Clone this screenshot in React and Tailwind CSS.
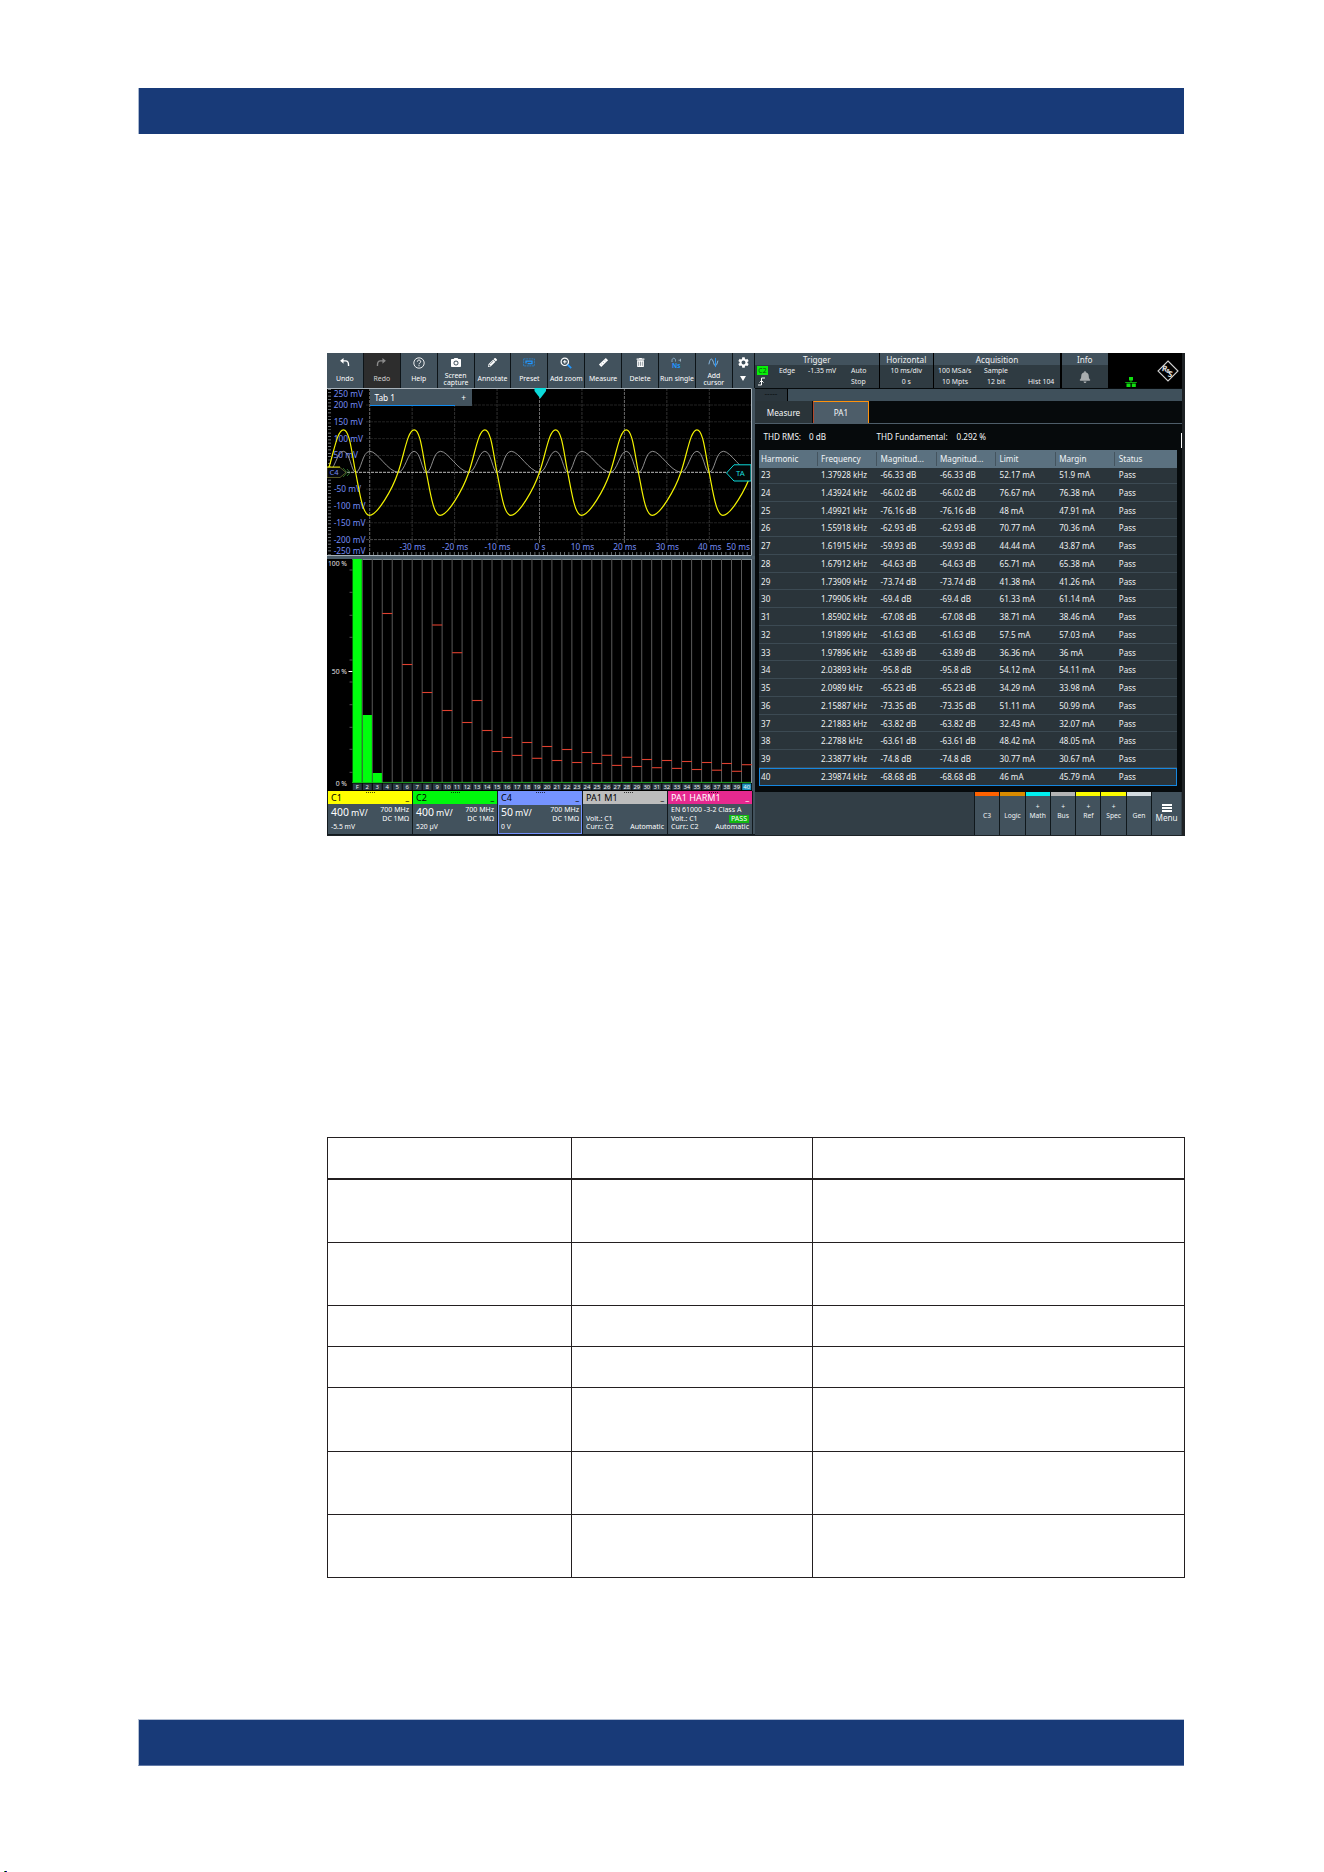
import { FaBell, FaPencilAlt, FaTrashAlt } from 'react-icons/fa';
import { MdPhotoCamera, MdSettings } from 'react-icons/md';

const UndoIcon = ({ flip }) => (
  <svg viewBox="0 0 12 12" className={flip ? 'h-[11px] w-[11px] -scale-x-100' : 'h-[11px] w-[11px]'}>
    <path d="M5 1 1.2 4.2 5 7.4Z" fill="currentColor" />
    <path d="M3 4.2h4.2c2.4 0 3.2 1.6 3.2 4.4v1.2" fill="none" stroke="currentColor" strokeWidth="1.5" />
  </svg>
);

const HelpIcon = () => (
  <svg viewBox="0 0 12 12" className="h-[12px] w-[12px]" fill="none" stroke="currentColor">
    <circle cx="6" cy="6" r="5.2" strokeWidth="0.9" />
    <path d="M4.3 4.7c0-2.2 3.4-2.2 3.4 0C7.7 5.9 6 5.9 6 7.3" strokeWidth="1" />
    <path d="M6 8.2v1.1" strokeWidth="1.1" />
  </svg>
);

const PresetIcon = () => (
  <svg viewBox="0 0 12 9" className="h-[9px] w-[12px]" fill="none">
    <rect x="0.6" y="0.9" width="10.8" height="7" stroke="#2b7fc4" strokeWidth="0.9" strokeDasharray="2 .6" />
    <path d="M3 5.600V3.200h6v2.400H4.600" stroke="#2196ff" strokeWidth="1.3" />
  </svg>
);

const ZoomIcon = () => (
  <svg viewBox="0 0 12 12" className="h-[12px] w-[12px]" fill="none">
    <circle cx="4.8" cy="4.8" r="3.7" stroke="#fff" strokeWidth="1.2" />
    <path d="M4.8 3v3.6M3 4.8h3.6" stroke="#fff" strokeWidth="1" />
    <path d="m7.6 7.6 3.6 3.6" stroke="#2196ff" strokeWidth="1.8" />
  </svg>
);

const MeasureIcon = () => (
  <svg viewBox="0 0 12 12" className="h-[11px] w-[11px]">
    <path d="M1 8.3 8.500 1 11 3.500 3.500 11Z" fill="#fff" />
    <path d="m3.5 7.5 1 1M5.5 5.6l1 1M7.5 3.7l1 1" stroke="#60707b" strokeWidth="0.6" />
  </svg>
);

const RunSingleIcon = () => (
  <svg viewBox="0 0 12 12" className="h-[12px] w-[12px]" fill="none">
    <path d="M1 5V3.500C1 .5 4.5.5 4.5 3.500v1" stroke="#8fb6d2" strokeWidth="0.9" />
    <path d="M7.5 3.2h1.8M9.5 1.8v2.8" stroke="#a7bccb" strokeWidth="0.8" />
    <text x="1" y="11" fontSize="6.5" fontWeight="700" fill="#2196ff">Ns</text>
  </svg>
);

const CursorIcon = () => (
  <svg viewBox="0 0 12 12" className="h-[11px] w-[11px]" fill="none">
    <path d="M1 8C2.5 0 4.5 1 6 6s3 5 4.8-2" stroke="#8fc1ea" strokeWidth="1" />
    <path d="M8.2 1v10" stroke="#2196ff" strokeWidth="1" />
  </svg>
);

const TOOLS = [
  { label: 'Undo', icon: <UndoIcon /> },
  { label: 'Redo', icon: <UndoIcon flip />, disabled: true },
  { label: 'Help', icon: <HelpIcon /> },
  { label: 'Screen capture', icon: <MdPhotoCamera size={12} /> },
  { label: 'Annotate', icon: <FaPencilAlt size={9} /> },
  { label: 'Preset', icon: <PresetIcon /> },
  { label: 'Add zoom', icon: <ZoomIcon /> },
  { label: 'Measure', icon: <MeasureIcon /> },
  { label: 'Delete', icon: <FaTrashAlt size={9} /> },
  { label: 'Run single', icon: <RunSingleIcon /> },
  { label: 'Add cursor', icon: <CursorIcon /> },
];

const HARMONICS = [
  ['23', '1.37928 kHz', '-66.33 dB', '52.17 mA', '51.9 mA'],
  ['24', '1.43924 kHz', '-66.02 dB', '76.67 mA', '76.38 mA'],
  ['25', '1.49921 kHz', '-76.16 dB', '48 mA', '47.91 mA'],
  ['26', '1.55918 kHz', '-62.93 dB', '70.77 mA', '70.36 mA'],
  ['27', '1.61915 kHz', '-59.93 dB', '44.44 mA', '43.87 mA'],
  ['28', '1.67912 kHz', '-64.63 dB', '65.71 mA', '65.38 mA'],
  ['29', '1.73909 kHz', '-73.74 dB', '41.38 mA', '41.26 mA'],
  ['30', '1.79906 kHz', '-69.4 dB', '61.33 mA', '61.14 mA'],
  ['31', '1.85902 kHz', '-67.08 dB', '38.71 mA', '38.46 mA'],
  ['32', '1.91899 kHz', '-61.63 dB', '57.5 mA', '57.03 mA'],
  ['33', '1.97896 kHz', '-63.89 dB', '36.36 mA', '36 mA'],
  ['34', '2.03893 kHz', '-95.8 dB', '54.12 mA', '54.11 mA'],
  ['35', '2.0989 kHz', '-65.23 dB', '34.29 mA', '33.98 mA'],
  ['36', '2.15887 kHz', '-73.35 dB', '51.11 mA', '50.99 mA'],
  ['37', '2.21883 kHz', '-63.82 dB', '32.43 mA', '32.07 mA'],
  ['38', '2.2788 kHz', '-63.61 dB', '48.42 mA', '48.05 mA'],
  ['39', '2.33877 kHz', '-74.8 dB', '30.77 mA', '30.67 mA'],
  ['40', '2.39874 kHz', '-68.68 dB', '46 mA', '45.79 mA'],
];

const COLUMNS = ['Harmonic', 'Frequency', 'Magnitud...', 'Magnitud...', 'Limit', 'Margin', 'Status'];

// harmonic number -> y of its limit line in the bar chart
const LIMITS = {
  4: 54.5, 6: 105.5, 8: 133.5, 9: 66, 10: 151.5, 11: 93.7, 12: 163.5, 13: 141.5, 14: 171.5,
  15: 192.5, 16: 178.5, 17: 196.4, 18: 183.5, 19: 199.3, 20: 187.5, 21: 201.5, 22: 190.5,
  23: 203.5, 24: 193.5, 25: 204.5, 26: 196.3, 27: 206.4, 28: 198.3, 29: 207.5, 30: 200.5,
  31: 208.7, 32: 201.5, 33: 209.4, 34: 202.5, 35: 210.5, 36: 203.5, 37: 211.2, 38: 204.5,
  39: 212.3, 40: 205.7,
};

const PERIOD = 70.7;
const CYCLES = [-4, -3, -2, -1, 0, 1, 2, 3];
const X0 = 212.5;
const Y0 = 84.3;

function currentPath() {
  return CYCLES.map((n) => {
    const x = (d) => (X0 + n * PERIOD + d).toFixed(1);
    const y = (d) => (Y0 - d).toFixed(1);
    return `M${x(0)} ${y(0)}C${x(6)} ${y(17)} ${x(9.5)} ${y(42.5)} ${x(16)} ${y(42.5)}S${x(24.5)} ${y(18)} ${x(28.2)} ${y(0)}S${x(35)} ${y(-43)} ${x(42)} ${y(-43)}C${x(50)} ${y(-43)} ${x(65)} ${y(-17)} ${x(70.7)} ${y(0)}`;
  }).join('');
}

function powerPath() {
  return CYCLES.map((n) => {
    const x = (d) => (X0 + n * PERIOD + d).toFixed(1);
    const y = (d) => (Y0 - d).toFixed(1);
    return `M${x(0)} ${y(0)}C${x(7)} ${y(0)} ${x(9.5)} ${y(21)} ${x(16)} ${y(21)}S${x(24)} ${y(0)} ${x(28.2)} ${y(0)}C${x(34)} ${y(0)} ${x(34.5)} ${y(21)} ${x(42.5)} ${y(21)}C${x(50)} ${y(21)} ${x(60)} ${y(1)} ${x(70.7)} ${y(0)}`;
  }).join('');
}

function WaveformPlot() {
  const volts = [200, 150, 100, 50, -50, -100, -150, -200];
  const times = [-30, -20, -10, 0, 10, 20, 30, 40];
  return (
    <svg viewBox="0 0 425 168" className="block h-[168px] w-[425px] bg-black" fontSize="8.3">
      {volts.map((v) => (
        <path
          key={v}
          d={`M39 ${Y0 - v * 0.3365}H425`}
          stroke={v === -200 ? '#6a6a6a' : '#303030'}
          strokeWidth="0.7"
          strokeDasharray="3 1"
        />
      ))}
      {[-40, ...times].map((t) => (
        <path
          key={t}
          d={`M${X0 + t * 4.245} 0V${t === -40 ? 168 : 155}`}
          stroke={t === 0 || t === 20 || t === -40 ? '#858585' : '#3c3c3c'}
          strokeWidth="0.8"
          strokeDasharray="3 1"
        />
      ))}
      <path d={`M0 ${Y0}H425`} stroke="#cfcfcf" strokeWidth="0.9" strokeDasharray="3 1" />
      <path d="M2.5 1V167" stroke="#8b9499" strokeWidth="3" strokeDasharray="0.7 2.665" />
      <path d="M42 165.5H424" stroke="#8b9499" strokeWidth="3" strokeDasharray="0.7 3.545" />

      <g fill="#748cf4">
        <text x="36" y="9" textAnchor="end">250 mV</text>
        {volts.map((v) => (
          <text key={v} x={v > 0 ? (v < 100 ? 31 : 36) : v > -100 ? 34 : 38.5} y={Y0 - v * 0.3365 + 3} textAnchor="end">
            {v} mV
          </text>
        ))}
        <text x="38.5" y="165.8" textAnchor="end">-250 mV</text>
        {times.map((t) => (
          <text key={t} x={X0 + t * 4.245 + 0.5} y="162" textAnchor="middle">
            {t === 0 ? '0 s' : `${t} ms`}
          </text>
        ))}
        <text x="423" y="162" textAnchor="end">50 ms</text>
      </g>

      <path d={powerPath()} fill="none" stroke="#b2b2b2" strokeWidth="0.8" />
      <path d={currentPath()} fill="none" stroke="#f2f200" strokeWidth="1.2" />

      <path d="M0 79.5H13L19 84.5 13 89.5H0Z" fill="#05070d" stroke="#7a7a32" strokeWidth="0.7" />
      <path d="M0 79H13" stroke="#f2f200" strokeWidth="0.9" />
      <path d="m16 80 4 4.5-4 4.5m4-8 3 3.5-3 3.5" fill="none" stroke="#3d9b3d" strokeWidth="0.7" />
      <text x="2.5" y="87.2" fontSize="7.5" fill="#748cf4">C4</text>

      <path d="M399.5 85 407 76.8H424V93H407Z" fill="#020708" stroke="#0cdada" strokeWidth="1" />
      <text x="409" y="88" fontSize="7.8" fill="#19dede">TA</text>
      <path d="M0 .5H424.5V167.5H0" fill="none" stroke="#a8b3bb" strokeWidth="1" />
      <path d="M207.5 0H219V3L213.3 10.5 207.5 3Z" fill="#0cdada" />
    </svg>
  );
}

function HarmonicsPlot() {
  const bars = Array.from({ length: 40 }, (_, i) => i + 1);
  const ticks = [11, 33.3, 56.3, 78.3, 101, 123, 145.7, 168.3, 190.3, 213.3];
  return (
    <svg viewBox="0 0 425 232" className="block h-[232px] w-[425px] bg-black">
      <g fontSize="6.8" fill="#e2e2e2" textAnchor="end">
        <text x="20" y="7.2">100 %</text>
        <text x="20" y="115">50 %</text>
        <text x="20" y="226.5">0 %</text>
      </g>
      {ticks.map((y) => (
        <path key={y} d={`M22.5 ${y}h3`} stroke="#777" strokeWidth="0.7" />
      ))}
      <path d="M21.5 112.5h4" stroke="#fff" strokeWidth="1" />
      <path d="M25.5 .5H425" stroke="#7b8990" strokeWidth="1" />
      {bars.map((n) => (
        <path key={n} d={`M${25.3 + n * 9.98} 0V224`} stroke="#5a5a5a" strokeWidth="1" />
      ))}
      <path d="M424.5 0V224" stroke="#8b969d" strokeWidth="1" />
      <path d="M25 223.4H424" stroke="#1fa01f" strokeWidth="1" />
      <path d="M25.6 0h9.2v223.500h-9.2zM35.700 156h9.2v67.500h-9.2zM45.700 214h9.2v9.500h-9.2z" fill="#00ff0d" />
      {Object.entries(LIMITS).map(([n, y]) => (
        <path key={n} d={`M${15.300 + n * 9.99} ${y}h10`} stroke="#e0402f" strokeWidth="1.1" />
      ))}
      {bars.map((n) => (
        <g key={n}>
          <rect x={15.8 + n * 9.985} y="224.5" width="9" height="6.5" fill={n === 40 ? '#1c93c0' : '#2b3a43'} />
          <text x={20.3 + n * 9.985} y="230" textAnchor="middle" fontSize="5.9" fill="#eef1f3">
            {n === 1 ? 'F' : n}
          </text>
        </g>
      ))}
    </svg>
  );
}

// three dots in the middle of a box header
const Grip = () => <span className="mt-px h-px w-[9px] border-t border-dotted border-black/70" />;

function ChannelBox({ name, head, scale, unit, offset, active }) {
  return (
    <div className="flex h-full w-[84px] flex-col bg-[#42525d] text-white">
      <div className={`grid h-[13px] shrink-0 grid-cols-[1fr_auto_1fr] px-[3px] text-[9px] leading-[13px] text-black ${head}`}>
        <span>{name}</span>
        <Grip />
        <span className="text-right text-[8px] leading-[12px]">_</span>
      </div>
      <div className={`flex flex-1 flex-col border px-[2px] pt-px ${active ? 'border-[#7593ff]' : 'border-transparent'}`}>
        <div className="flex justify-between">
          <div className="text-[10.4px] leading-[12.500px]">
            {scale} <span className="-ml-[0.5px] text-[8.8px]">{unit}</span>
          </div>
          <div className="text-right text-[7px] leading-[8.5px]">
            700 MHz
            <br />
            DC 1MΩ
          </div>
        </div>
        <div className="text-[6.8px] leading-[8px]">{offset}</div>
      </div>
    </div>
  );
}

function AnalysisBox({ name, head, standard, pass }) {
  return (
    <div className="flex h-full w-[84px] flex-col bg-[#42525d] text-white">
      <div className={`grid h-[13px] shrink-0 grid-cols-[38px_auto_1fr] px-[3px] text-[9px] leading-[13px] whitespace-nowrap ${head}`}>
        <span>{name}</span>
        <Grip />
        <span className="text-right text-[8px] leading-[12px]">_</span>
      </div>
      <div className="px-[3px] pt-[2px] text-[7px] leading-[8.5px] whitespace-nowrap">
        <div className="h-[8.5px]">{standard}</div>
        <div className="flex justify-between">
          <span>Volt.: C1</span>
          {pass && <span className="h-[8.5px] bg-[#12b812] px-[2px]">PASS</span>}
        </div>
        <div className="flex justify-between">
          <span>Curr.: C2</span>
          <span>Automatic</span>
        </div>
      </div>
    </div>
  );
}

function Toolbar() {
  return (
    <div className="flex h-[35px] bg-[#0d1418] text-white">
      {TOOLS.map(({ label, icon, disabled }) => (
        <div key={label} className="w-[36.9px] shrink-0 pr-px">
          <div className={`flex h-full flex-col items-center ${disabled ? 'bg-[#2d2d2d] text-[#8b8b8b]' : 'bg-[#42525d]'}`}>
            <div className="flex h-[19px] items-center justify-center">{icon}</div>
            <div className="flex h-[15px] w-[30px] items-center justify-center text-center text-[6.9px] leading-[6.2px]">
              <span className={disabled ? 'text-[#d5d5d5]' : label.includes('cap') || label.includes('cur') ? 'w-[24px]' : 'whitespace-nowrap'}>
                {label}
              </span>
            </div>
          </div>
        </div>
      ))}
      <div className="flex flex-1 flex-col items-center bg-[#42525d] pt-[3px]">
        <MdSettings size={13} />
        <svg viewBox="0 0 6 5" className="mt-[7px] h-[5px] w-[6px]">
          <path d="M0 0H6L3 5Z" fill="#fff" />
        </svg>
      </div>
      <div className="w-px" />
    </div>
  );
}

function StatusPanel({ title, width, children }) {
  return (
    <div className={`flex flex-col bg-[#2f3b42] ${width}`}>
      <div className="h-[12px] bg-[#42525d] text-center text-[8.2px] leading-[13px]">{title}</div>
      {children}
    </div>
  );
}

function StatusBar() {
  return (
    <div className="flex h-[35px] gap-[1.5px] bg-black text-[6.9px] leading-[11px] text-[#eef0f1]">
      <StatusPanel title="Trigger" width="w-[123.5px]">
        <div className="grid grid-cols-[22px_29px_43px_1fr] pl-[2px] whitespace-nowrap">
          <span className="mt-px h-[9px] w-[11px] bg-[#08ee08] text-center leading-[9px] text-[#0b560b]">C2</span>
          <span>Edge</span>
          <span>-1.35 mV</span>
          <span>Auto</span>
          <svg viewBox="0 0 10 9" className="mt-px h-[9px] w-[10px]" fill="none" stroke="#fff">
            <path d="M1 8h3.500V1H8M2.500 5.500l2-2 2 2" strokeWidth="1" />
          </svg>
          <span />
          <span />
          <span>Stop</span>
        </div>
      </StatusPanel>
      <StatusPanel title="Horizontal" width="w-[52.5px]">
        <div className="text-center">
          10 ms/div
          <br />0 s
        </div>
      </StatusPanel>
      <StatusPanel title="Acquisition" width="w-[126px]">
        <div className="grid grid-cols-[46px_44px_1fr] pl-[4px] whitespace-nowrap">
          <span>100 MSa/s</span>
          <span>Sample</span>
          <span />
          <span className="pl-[4px]">10 Mpts</span>
          <span className="pl-[3px]">12 bit</span>
          <span>Hist 104</span>
        </div>
      </StatusPanel>
      <StatusPanel title="Info" width="w-[46.5px]">
        <div className="flex flex-1 items-center justify-center text-[#a9adaf]">
          <FaBell size={12} />
        </div>
      </StatusPanel>
      <div className="flex flex-1 items-end justify-between pr-[3px] pl-[15px]">
        <svg viewBox="0 0 12 10" className="mb-[1px] h-[10px] w-[12px]" fill="#10e010">
          <path d="M4 0h4v3.5H4zM1.500 6.500h4V10h-4zM6.800 6.500h4V10h-4zM5.600 3.500h.8V5h5.400v.8H.2V5h5.400z" />
        </svg>
        <svg viewBox="0 0 22 22" className="mb-[6px] h-[22px] w-[22px]" fill="#e0e0e0" fontWeight="700">
          <path d="M11 1 21 11 11 21 1 11Z" fill="none" stroke="#d2d2d2" strokeWidth="1.1" />
          <text x="5" y="11.500" fontSize="8" transform="rotate(12 8 9)">R</text>
          <text x="9.200" y="12.500" fontSize="6">&amp;</text>
          <text x="11" y="17" fontSize="8" transform="rotate(12 13 14)">S</text>
        </svg>
      </div>
    </div>
  );
}

function ResultTable() {
  const grid = 'grid grid-cols-[57.5px_59.5px_59.5px_59.5px_59.7px_59.6px_1fr]';
  return (
    <div className="ml-[4px] w-[418px] text-[8.1px]">
      <div className={`relative z-10 -mb-[1.8px] h-[18px] bg-[#5b7180] leading-[18px] text-[#f1f4f6] ${grid}`}>
        {COLUMNS.map((name, i) => (
          <div key={i} className="flex items-center">
            {i > 0 && <span className="h-[14px] w-px bg-[#44545f]" />}
            <span className={i === 0 ? 'pl-[2px]' : 'pl-[3.5px]'}>{name}</span>
          </div>
        ))}
      </div>
      {HARMONICS.map(([n, freq, mag, limit, margin]) => (
        <div
          key={n}
          className={`h-[17.76px] bg-[#2a343a] leading-[18.4px] text-[#eef0f1] ${grid} ${
            n === '40' ? 'outline-[1.2px] -outline-offset-1 outline-[#1687e0]' : 'border-b border-[#3c4a53]'
          }`}
        >
          {[n, freq, mag, mag, limit, margin, 'Pass'].map((cell, i) => (
            <span key={i} className={i === 0 ? 'pl-[2px]' : 'pl-[4.5px]'}>{cell}</span>
          ))}
        </div>
      ))}
    </div>
  );
}

const ADD_BUTTONS = [
  { label: 'C3', strip: 'bg-[#ff6200]' },
  { label: 'Logic', strip: 'bg-[#d98b00]' },
  { label: 'Math', strip: 'bg-[#00f0f0]', plus: true },
  { label: 'Bus', strip: 'bg-[#b4b4b4]', plus: true },
  { label: 'Ref', strip: 'bg-[#fbfb00]', plus: true },
  { label: 'Spec', strip: 'bg-[#fbfb00]', plus: true },
  { label: 'Gen', strip: 'bg-[#d3dce0]' },
];

function SignalBar() {
  return (
    <div className="flex h-[43px] bg-[#323e46] text-[#f1f4f6]">
      <div className="w-[219px]" />
      <div className="flex gap-px bg-[#10181c] pl-px">
        {ADD_BUTTONS.map(({ label, strip, plus }) => (
          <div key={label} className="flex w-[24.3px] flex-col bg-[#42525d] text-center text-[6.7px]">
            <div className={`h-[3.5px] ${strip}`} />
            <div className="mt-[7px] h-[8px] leading-[8px]">{plus && '+'}</div>
            <div className="leading-[9px]">{label}</div>
          </div>
        ))}
        <div className="flex w-[29px] flex-col items-center bg-[#42525d] pt-[12px] text-[8.2px] leading-[10px]">
          <div className="mb-px flex flex-col gap-px">
            <span className="h-[2px] w-[10px] bg-white" />
            <span className="h-[2px] w-[10px] bg-white" />
            <span className="h-[2px] w-[10px] bg-white" />
          </div>
          Menu
        </div>
      </div>
    </div>
  );
}

function Oscilloscope() {
  return (
    <div className="flex h-[483px] w-[858px] overflow-hidden border-b border-[#1c2226] bg-[#42525d] font-['Noto_Sans',sans-serif]">
      <div className="w-[428px] shrink-0">
        <Toolbar />
        <div className="relative">
          <WaveformPlot />
          <div className="absolute top-px left-[42.5px] flex h-[17px] text-[8.3px] leading-[17px] text-white">
            <div className="w-[85.5px] border-b border-[#118cf0] bg-[#42525d] pl-[5px]">Tab 1</div>
            <div className="w-[17px] bg-[#42525d] text-center">+</div>
          </div>
        </div>
        <div className="h-[3px] bg-[#4b5c68]" />
        <HarmonicsPlot />
        <div className="flex h-[44px] gap-px bg-[#12191d] pb-px pl-px">
          <ChannelBox name="C1" head="bg-[#ffff00]" scale="400" unit="mV/" offset="-5.5 mV" />
          <ChannelBox name="C2" head="bg-[#00f80c]" scale="400" unit="mV/" offset="520 µV" />
          <ChannelBox name="C4" head="bg-[#7593ff]" scale="50" unit="mV/" offset="0 V" active />
          <AnalysisBox name="PA1 M1" head="bg-[#bdbdbd] text-black" />
          <AnalysisBox name="PA1 HARM1" head="bg-[#e6298f] text-white" standard="EN 61000 -3-2 Class A" pass />
          <div className="flex-1 bg-[#42525d]" />
        </div>
      </div>

      <div className="flex flex-1 flex-col border-r-[3px] border-[#1e2225] bg-[#060a0c]">
        <StatusBar />
        <div className="mt-px flex h-[12px] bg-[#3f505b]">
          <div className="w-[33px] border-r border-black bg-[#2b363d] text-center text-[8px] leading-[9px] text-[#0d1316]">-----</div>
        </div>
        <div className="flex h-[23px] gap-px border-b border-[#4d5d69] text-[8.2px] leading-[23px] text-[#f4f6f7]">
          <div className="w-[57px] bg-[#2a3439] text-center">Measure</div>
          <div className="w-[56px] border-t border-r border-l border-t-[#ff920c] border-r-[#ff920c] border-l-[#b2482c] bg-[#4d5d69] text-center leading-[22px]">
            PA1
          </div>
        </div>
        <div className="flex h-[26px] justify-between pl-[8.5px] text-[8.1px] leading-[26px] text-[#f4f6f7]">
          <div className="flex">
            <span className="w-[45.5px]">THD RMS:</span>
            <span className="w-[67.5px]">0 dB</span>
            <span className="w-[80px]">THD Fundamental:</span>
            <span>0.292 %</span>
          </div>
          <span className="mt-[9px] h-[15px] w-px bg-white" />
        </div>
        <ResultTable />
        <div className="flex-1" />
        <SignalBar />
      </div>
    </div>
  );
}

const LINES = [
  'h-[42px] border-b-2',
  'h-[63px] border-b',
  'h-[63px] border-b',
  'h-[41px] border-b',
  'h-[41px] border-b',
  'h-[64px] border-b',
  'h-[63px] border-b',
  'h-[63px] border-b',
];

function EmptyTable() {
  return (
    <div className="w-[858px] border-t border-[#231f20]">
      {LINES.map((line, i) => (
        <div key={i} className={`flex border-[#231f20] ${line}`}>
          <div className="w-[244px] border-l border-[#231f20]" />
          <div className="w-[241px] border-l border-[#231f20]" />
          <div className="w-[373px] border-x border-[#231f20]" />
        </div>
      ))}
    </div>
  );
}

function App() {
  return (
    <div className="flex h-[1872px] w-[1324px] flex-col overflow-hidden bg-white pt-[88px]">
      <div className="ml-[138px] h-[46px] w-[1046px] shrink-0 border-l border-[#a9b8d0] bg-[#183a78]" />
      <div className="mt-[219px] ml-[327px]">
        <Oscilloscope />
      </div>
      <div className="mt-[301px] ml-[327px]">
        <EmptyTable />
      </div>
      <div className="mt-[141px] ml-[138px] h-[47px] w-[1046px] shrink-0 border-t border-b border-l border-t-[#b4c0d4] border-b-[#6279a6] border-l-[#b4c0d4] bg-[#183a78]" />
      <div className="mt-auto ml-[4px] flex h-px w-[3px] shrink-0">
        <span className="w-px bg-[#2aa02a]" />
        <span className="w-px bg-black" />
        <span className="w-px bg-[#0a0ac8]" />
      </div>
    </div>
  );
}

export default App;
